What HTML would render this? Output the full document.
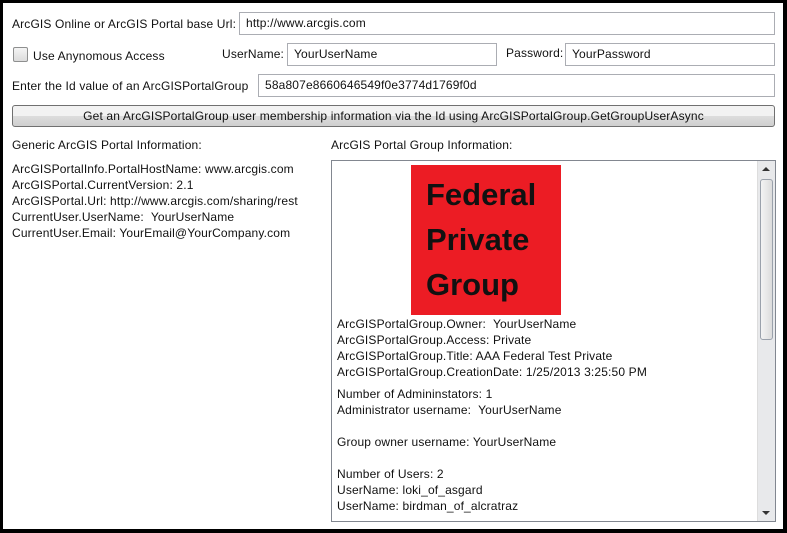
<!DOCTYPE html>
<html><head><style>
body{margin:0;width:787px;height:533px;overflow:hidden;background:#000;font-family:"Liberation Sans",sans-serif;font-size:12px;color:#111;letter-spacing:0.15px}
#win{position:absolute;left:3px;top:3px;width:780px;height:526px;background:#fff}
.a{position:absolute;white-space:nowrap}
.tb{position:absolute;border:1px solid #abadb3;background:#fff;box-sizing:border-box;padding-left:6px;line-height:21px;height:23px}
</style></head><body>
<div id="win"></div>
<div class="a" style="left:12px;top:17px">ArcGIS Online or ArcGIS Portal base Url:</div>
<div class="tb" style="left:239px;top:12px;width:536px">http://www.arcgis.com</div>
<div class="a" style="left:13px;top:47px;width:13px;height:13px;border:1px solid #8e8f8f;border-radius:2px;background:linear-gradient(#f4f4f4,#dcdcdc)"></div>
<div class="a" style="left:33px;top:49px">Use Anynomous Access</div>
<div class="a" style="left:222px;top:47px">UserName:</div>
<div class="tb" style="left:287px;top:43px;width:210px">YourUserName</div>
<div class="a" style="left:506px;top:46px">Password:</div>
<div class="tb" style="left:565px;top:43px;width:210px">YourPassword</div>
<div class="a" style="left:12px;top:79px">Enter the Id value of an ArcGISPortalGroup</div>
<div class="tb" style="left:258px;top:74px;width:517px">58a807e8660646549f0e3774d1769f0d</div>
<div class="a" style="left:12px;top:105px;width:763px;height:22px;box-sizing:border-box;border:1px solid #707070;border-radius:3px;background:linear-gradient(#f2f2f2 50%,#dddddd 50%,#cfcfcf);text-align:center;line-height:21px">Get an ArcGISPortalGroup user membership information via the Id using ArcGISPortalGroup.GetGroupUserAsync</div>
<div class="a" style="left:12px;top:138px">Generic ArcGIS Portal Information:</div>
<div class="a" style="left:12px;top:161px;line-height:16px">ArcGISPortalInfo.PortalHostName: www.arcgis.com<br>ArcGISPortal.CurrentVersion: 2.1<br>ArcGISPortal.Url: http://www.arcgis.com/sharing/rest<br>CurrentUser.UserName: &nbsp;YourUserName<br>CurrentUser.Email: YourEmail@YourCompany.com</div>
<div class="a" style="left:331px;top:138px">ArcGIS Portal Group Information:</div>
<div class="a" style="left:331px;top:160px;width:445px;height:362px;box-sizing:border-box;border:1px solid #828790;overflow:hidden">
 <div class="a" style="right:0;top:0;width:17px;height:360px;background:#e8e9eb;border-left:1px solid #ddd"></div>
 <div class="a" style="right:2px;top:18px;width:13px;height:161px;border:1px solid #9aa1ab;border-radius:3px;background:linear-gradient(90deg,#f3f3f3,#dcdcdc);box-sizing:border-box"></div>
 <div class="a" style="right:5px;top:6px;width:0;height:0;border:4px solid transparent;border-bottom:4px solid #333;border-top:0"></div>
 <div class="a" style="right:5px;bottom:6px;width:0;height:0;border:4px solid transparent;border-top:4px solid #333;border-bottom:0"></div>
 <div class="a" style="left:79px;top:4px;width:150px;height:150px;background:#ec1c24;color:#111;font-weight:bold;font-size:31px;line-height:45px;padding:7px 0 0 15px;box-sizing:border-box;letter-spacing:0">Federal<br>Private<br>Group</div>
 <div class="a" style="left:5px;top:155px;line-height:16px">ArcGISPortalGroup.Owner: &nbsp;YourUserName<br>ArcGISPortalGroup.Access: Private<br>ArcGISPortalGroup.Title: AAA Federal Test Private<br>ArcGISPortalGroup.CreationDate: 1/25/2013 3:25:50 PM</div>
 <div class="a" style="left:5px;top:225px;line-height:16px">Number of Admininstators: 1<br>Administrator username: &nbsp;YourUserName<br><br>Group owner username: YourUserName<br><br>Number of Users: 2<br>UserName: loki_of_asgard<br>UserName: birdman_of_alcratraz</div>
</div>
</body></html>
